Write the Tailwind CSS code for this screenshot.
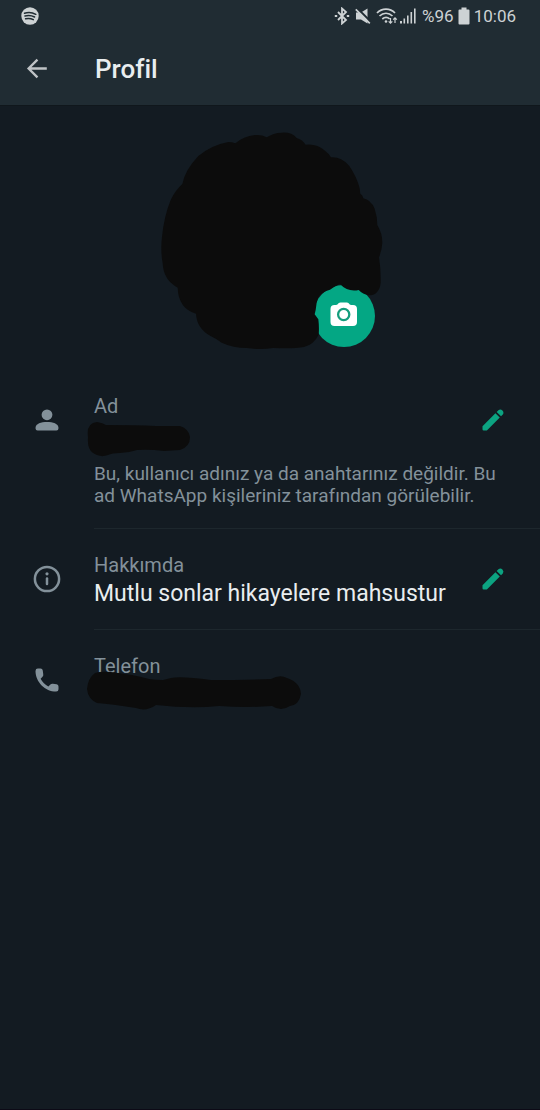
<!DOCTYPE html>
<html lang="tr">
<head>
<meta charset="utf-8">
<meta name="viewport" content="width=device-width, initial-scale=1">
<title>Profil</title>
<script src="https://cdn.jsdelivr.net/npm/@tailwindcss/browser@4"></script>
</head>
<body class="flex min-h-screen flex-col border-b border-[#0c0a16] bg-[#131b22] font-['Roboto',sans-serif] text-[#83919a]">

<header class="border-b border-[#10171c] bg-[#202c33]">
  <div class="flex h-8 items-center justify-between pr-6 pl-[21px] text-[#cdd2d4]">
    <svg class="size-[18px]" viewBox="0 0 18 18" fill="none" aria-hidden="true">
      <circle cx="9" cy="9" r="8.7" fill="#cdd2d4"/>
      <path d="M3.5 6.2c4-1.1 8-.7 11.3 1.1M4 9c3.500-.9 6.700-.5 9.600 1M4.600 11.800c2.800-.7 5.400-.4 7.700.9" stroke="#202c33" stroke-width="1.500" stroke-linecap="round"/>
    </svg>
    <div class="flex items-center gap-1">
      <svg class="h-[18px] w-4" viewBox="0 0 16 18" fill="none" stroke="currentColor" stroke-width="1.800" aria-hidden="true">
        <path d="M4 5l8 8-4 3.500v-15L12 5l-8 8"/>
        <path d="M.8 9h2.400M12.800 9h2.400" stroke-width="2"/>
      </svg>
      <svg class="mx-px h-[18px] w-4" viewBox="0 0 16 18" aria-hidden="true">
        <path fill="currentColor" d="M1 5.500h5l6.500-4v15l-6.500-4H1z"/>
        <path d="M2 1l14 14" stroke="#202c33" stroke-width="2"/>
        <path d="M.8 2.300l14 14" stroke="currentColor" stroke-width="1.700"/>
      </svg>
      <svg class="h-[18px] w-[22px]" viewBox="0 0 22 18" fill="none" stroke="currentColor" stroke-width="1.700" aria-hidden="true">
        <path d="M1 6c5-5.200 13-5.200 18 0M3.500 9c3.800-3.700 9.200-3.700 13 0M6.300 12c2.200-2 5.200-2 7.400-.2"/>
        <circle cx="10" cy="14.500" r="1.300" fill="currentColor" stroke="none"/>
        <path stroke-width="1.200" d="M14.500 11v5M12.700 14.300l1.800 1.900 1.800-1.900M19 16v-5M17.200 12.700l1.800-1.900 1.800 1.900"/>
      </svg>
      <svg class="mr-0.5 -ml-0.5 h-[18px] w-4" viewBox="0 0 16 18" fill="currentColor" aria-hidden="true">
        <path d="M0 14h2v2.500H0zM3.500 11.500h1.600v5H3.500zM7 8.500h1.600v8H7zM10.500 5h1.600v11.500h-1.600zM14 1.500h1.600v15H14z"/>
      </svg>
      <span class="text-[17px] leading-5">%96</span>
      <svg class="h-[18px] w-3" viewBox="0 0 12 18" fill="currentColor" aria-hidden="true">
        <path d="M3.500 0.500h5v2H10.500q1 0 1 1v13q0 1-1 1h-9q-1 0-1-1v-13q0-1 1-1h2z"/>
      </svg>
      <time class="text-[17px] leading-5">10:06</time>
    </div>
  </div>
  <div class="flex h-[73px] items-center">
    <button type="button" aria-label="Geri" class="flex w-[95px] shrink-0 pl-[23px]">
      <svg class="size-7" viewBox="0 0 30 30" fill="none" stroke="#bfc3c6" stroke-width="2.500" aria-hidden="true">
        <path d="M25.500 14.500H6M15.500 5L6 14.500l9.500 9.500"/>
      </svg>
    </button>
    <h1 class="text-[26px] leading-8 font-medium text-[#e9edef]">Profil</h1>
  </div>
</header>

<main class="flex-1">
  <section class="flex justify-center pt-3.5 pb-2.5" aria-label="Profil fotoğrafı">
    <div class="relative size-60">
      <button type="button" aria-label="Fotoğrafı değiştir" class="absolute top-[165px] left-[163px] flex size-[62px] items-center justify-center rounded-full bg-[#04a784]">
        <svg class="size-8" viewBox="0 0 32 32" aria-hidden="true">
          <path fill="#fff" d="M6.500 5h1.500q1 0 1.700-.8l.8-.9q.9-.9 2-.9h6.200q1.200 0 2 .9l.8.9q.7.800 1.700.8H25q4 0 4 4v13q0 4-4 4H6.500q-4 0-4-4V9q0-4 4-4z"/>
          <circle cx="15.700" cy="14.500" r="5.600" fill="none" stroke="#149d7d" stroke-width="2.300"/>
        </svg>
      </button>
      <svg class="pointer-events-none relative size-60" viewBox="0 0 720 720" aria-hidden="true">
        <path fill="#0c0c0c" d="M395 38Q425 36 440 54Q456 58 467 74Q500 70 525 92Q537 101 543 112Q575 110 598 138Q620 170 629 205L631 221Q638 225 640 235Q662 239 674 266Q682 290 682 315Q697 340 697 368Q696 390 687 412Q693 450 692 488Q688 526 655 526Q639 523 626 510Q593 517 570 492Q553 498 540 509Q515 515 505 532Q498 550 497 570L494 583L505 598Q508 622 506 644Q492 673 462 681Q430 687 370 684Q330 690 290 684Q250 684 215 668Q200 657 183 649Q140 625 138 581Q85 565 83 503Q40 480 38 430Q31 390 36 350Q42 290 62 240Q75 212 97 192Q105 150 145 108Q185 75 235 66Q246 66 256 70Q280 49 315 45Q335 43 350 52Q370 38 395 38Z"/>
      </svg>
    </div>
  </section>

  <section class="pt-[21px]">
    <div class="flex items-center">
      <div class="flex w-[94px] shrink-0 justify-center">
        <svg class="size-6" viewBox="0 0 24 24" fill="currentColor" aria-hidden="true">
          <circle cx="12" cy="6.800" r="5.400"/>
          <path d="M.6 19.500C.6 15.800 6 14 12 14s11.400 1.800 11.400 5.500v1q0 1.900-1.900 1.900h-19Q.6 22.400.6 20.500z"/>
        </svg>
      </div>
      <div class="min-w-0 flex-1">
        <h2 class="text-xl leading-[30px]">Ad</h2>
        <div class="flex h-7">
          <svg class="-ml-2 h-9 w-[106px] shrink-0" viewBox="0 0 106 36" aria-hidden="true">
            <path fill="#0c0c0c" d="M11 1Q17 2 20 4Q50 4 70 5L94 5Q103 8 104 16Q104 26 94 29L78 30Q63 28 51 29Q42 32 34 32Q26 32 22 34Q14 37 7 32Q1 28 2 16Q0 2 11 1Z"/>
          </svg>
        </div>
      </div>
      <button type="button" aria-label="Adı düzenle" class="mr-[33px] shrink-0 text-[#0ca381]">
        <svg class="size-7" viewBox="0 0 24 24" fill="currentColor" aria-hidden="true">
          <path d="M3 17.250V20q0 1 1 1h2.750L17.810 9.940l-3.750-3.750zM20.400 7.350a2.700 2.700 0 0 0-3.750-3.750L15.130 5.120l3.750 3.750z"/>
        </svg>
      </button>
    </div>
    <p class="mt-3.5 mr-[33px] ml-[94px] text-[19px] leading-[22px]">Bu, kullanıcı adınız ya da anahtarınız değildir. Bu ad WhatsApp kişileriniz tarafından görülebilir.</p>
    <hr class="mt-[21px] ml-[94px] border-[#1d272d]">
  </section>

  <section>
    <div class="flex items-center py-[21px]">
      <div class="flex w-[94px] shrink-0 justify-center">
        <svg class="size-8" viewBox="0 0 32 32" fill="none" stroke="currentColor" stroke-width="2.500" stroke-linecap="round" aria-hidden="true">
          <circle cx="16" cy="16" r="12.100"/>
          <path d="M16 15.500v5.500"/>
          <circle cx="16" cy="10.800" r="1.600" fill="currentColor" stroke="none"/>
        </svg>
      </div>
      <div class="min-w-0 flex-1">
        <h2 class="text-xl leading-[30px]">Hakkımda</h2>
        <p class="text-[23px] leading-7 text-[#e9edef]">Mutlu sonlar hikayelere mahsustur</p>
      </div>
      <button type="button" aria-label="Hakkımda bilgisini düzenle" class="mr-[33px] shrink-0 text-[#0ca381]">
        <svg class="size-7" viewBox="0 0 24 24" fill="currentColor" aria-hidden="true">
          <path d="M3 17.250V20q0 1 1 1h2.750L17.810 9.940l-3.750-3.750zM20.400 7.350a2.700 2.700 0 0 0-3.750-3.750L15.130 5.120l3.750 3.750z"/>
        </svg>
      </button>
    </div>
    <hr class="ml-[94px] border-[#1d272d]">
  </section>

  <section class="flex items-center py-[21px]">
    <div class="flex w-[94px] shrink-0 justify-center">
      <svg class="size-[30px]" viewBox="0 0 24 24" fill="currentColor" aria-hidden="true">
        <path d="M2.800 4.700Q2.800 2.800 4.700 2.800H6.800q1.600 0 1.800 1.500L9 7.300q.2 1.200-.6 2L6.900 10.900q2.200 4.200 6.200 6.200l1.600-1.500q.8-.8 2-.6l3 .4q1.500.2 1.500 1.800v2.100q0 1.900-1.900 1.900C10.500 21.200 2.800 13.500 2.800 4.700z"/>
      </svg>
    </div>
    <div class="min-w-0 flex-1">
      <h2 class="text-xl leading-[30px]">Telefon</h2>
      <div class="flex h-7">
        <svg class="relative -mt-2.5 -ml-2 h-10 w-[216px] shrink-0" viewBox="0 0 216 40" aria-hidden="true">
          <path fill="#0c0c0c" d="M9 2Q15 0 25 1L46 4Q56 6 63 8Q70 9 77 9L85 7Q95 5 125 9Q155 9 185 8Q194 3 201 7Q214 11 215 23Q213 34 204 35Q195 41 186 35Q160 37 133 35Q105 38 70 34Q60 41 50 37Q25 33 11 32Q2 28 1 18Q2 7 9 2Z"/>
        </svg>
      </div>
    </div>
  </section>
</main>
</body>
</html>
